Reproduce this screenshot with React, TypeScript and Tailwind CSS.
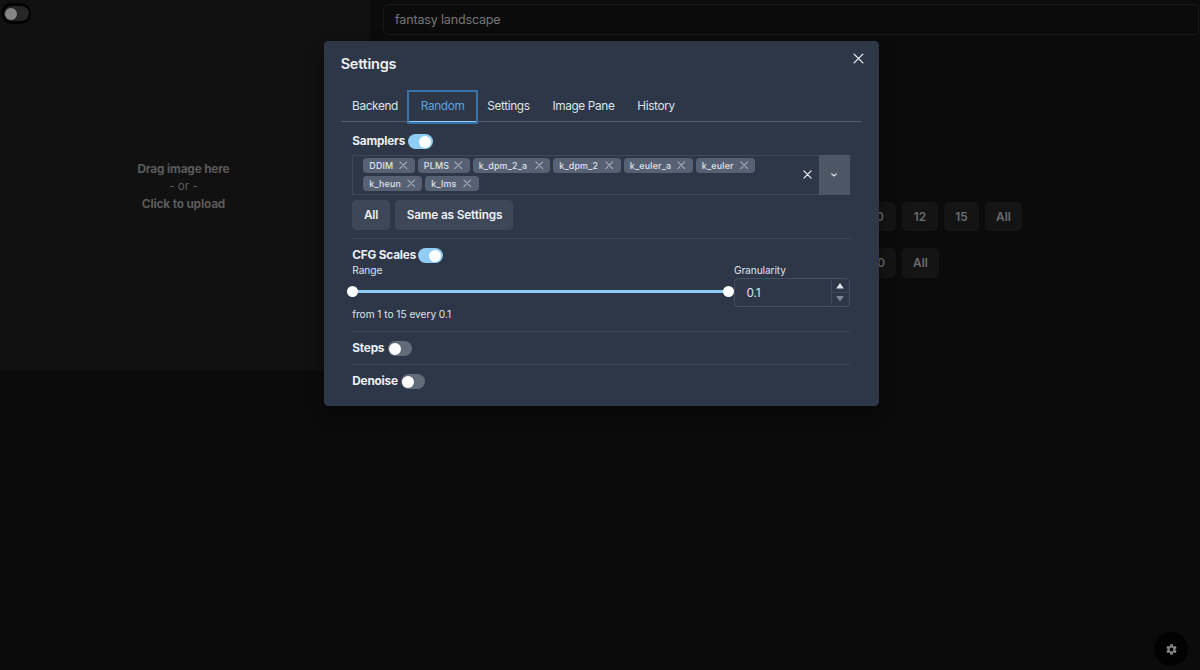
import { MdSettings } from "react-icons/md";

function Cross({ size, width = 1.2, className = "" }: { size: number; width?: number; className?: string }) {
  return (
    <svg width={size} height={size} viewBox="0 0 10 10" className={className} fill="none" stroke="currentColor" strokeWidth={width} strokeLinecap="round">
      <path d="M1 1L9 9M9 1L1 9" />
    </svg>
  );
}

function Switch({ on = false }: { on?: boolean }) {
  return (
    <span className={`flex h-[15px] w-[24.5px] shrink-0 items-center rounded-full p-[1.5px] ${on ? "justify-end bg-[#90cdf4]" : "justify-start bg-[#626b78]"}`}>
      <span className="size-[12px] rounded-full bg-white" />
    </span>
  );
}

function Setting({ label, width, on = false }: { label: string; width: string; on?: boolean }) {
  return (
    <div className="flex h-[15px] items-center text-[11.8px] leading-[15px] font-bold tracking-[-0.2px]">
      <span className={`shrink-0 whitespace-nowrap ${width}`}>{label}</span>
      <Switch on={on} />
    </div>
  );
}

function Tag({ label, width }: { label: string; width: string }) {
  return (
    <span className={`flex h-[15px] items-center justify-between rounded-[4px] bg-[#566174] pr-[7px] pl-[6px] text-[8.9px] font-medium tracking-[0.2px] text-[#e0e4ea] ${width}`}>
      {label}
      <Cross size={8.5} width={1.2} className="text-[#a9b1bd]" />
    </span>
  );
}

function DimButton({ label, width }: { label: string; width: string }) {
  return <button className={`h-[29.5px] rounded-[4.5px] bg-[#141414] pt-[2px] text-[11.8px] font-semibold text-[#6c6c6c] ${width}`}>{label}</button>;
}

const tabs = ["Backend", "Random", "Settings", "Image Pane", "History"];

export default function App() {
  return (
    <div className="relative h-[670px] w-[1200px] overflow-hidden bg-[#0b0b0b] font-['Inter',sans-serif] text-[11.6px] leading-[17.4px]">
      <div className="flex">
        <section className="flex h-[370px] w-[370px] flex-col items-center justify-center bg-[#111111] pt-[4px] pr-[3px] text-[#5b5b5b]">
          <b className="text-[11.8px] font-bold tracking-[-0.15px]">Drag image here</b>
          <span>- or -</span>
          <b className="text-[11.8px] font-bold tracking-[-0.15px]">Click to upload</b>
        </section>
        <main className="flex w-[830px] flex-col pt-[4px] pl-[13px]">
          <div className="flex h-[31px] w-[816px] items-center rounded-[4.5px] border border-[#191919] pl-[11px] text-[12.5px] tracking-[-0.15px] text-[#777777]">fantasy landscape</div>
          <div className="mt-[166.5px] flex gap-[6px] pl-[476px]">
            <DimButton label="10" width="w-[37px]" />
            <DimButton label="12" width="w-[36px]" />
            <DimButton label="15" width="w-[35px]" />
            <DimButton label="All" width="w-[37px]" />
          </div>
          <div className="mt-[17px] flex gap-[6px] pl-[476px]">
            <DimButton label="50" width="w-[37px]" />
            <DimButton label="All" width="w-[37px]" />
          </div>
        </main>
      </div>

      <div className="absolute top-[3px] left-[1px] flex h-[21px] w-[30px] items-center justify-center rounded-full bg-black">
        <span className="flex h-[15px] w-[25px] items-center rounded-full bg-[#262626] p-[1.5px]">
          <span className="size-[12px] rounded-full bg-[#858585]" />
        </span>
      </div>
      <div className="absolute top-[632px] left-[1154px] flex size-[34px] items-center justify-center rounded-full bg-[#020202] text-[#858585]">
        <MdSettings size={13} />
      </div>

      <div role="dialog" className="absolute top-[41px] left-[323.5px] flex h-[365px] w-[555px] flex-col rounded-[4.5px] bg-[#2d3748] px-[17.2px] text-[#eceff3] shadow-[0_7px_18px_rgba(0,0,0,0.4)]">
        <header className="flex h-[51px] items-start justify-between pt-[12px]">
          <h2 className="pt-[1px] text-[14.5px] leading-[20px] font-semibold tracking-[-0.25px]">Settings</h2>
          <Cross size={11} className="-mr-[3px]" />
        </header>
        <nav className="flex h-[30px] border-b border-[#566072] text-[11.8px] tracking-[-0.35px] text-[#dfe4ea]">
          {tabs.map((t) => (
            <button
              key={t}
              className={`flex h-[30px] shrink-0 items-center border-b-[1.5px] px-[11.4px] pt-[1px] ${t === "Random" ? "border-[#90cdf4] text-[#5da2dd] shadow-[0_0_0_2px_#3a73a9]" : "border-transparent"}`}
            >
              {t}
            </button>
          ))}
        </nav>
        <div className="flex flex-col px-[11.6px]">
          <div className="mt-[12px]">
            <Setting label="Samplers" width="w-[56px]" on />
          </div>
          <div className="mt-[5.5px] flex h-[40px] border border-[#3d4859]">
            <div className="flex flex-1 flex-wrap content-start gap-x-[3px] gap-y-[3px] pt-[2.5px] pl-[10px]">
              <Tag label="DDIM" width="w-[51.5px]" />
              <Tag label="PLMS" width="w-[52px]" />
              <Tag label="k_dpm_2_a" width="w-[77.5px]" />
              <Tag label="k_dpm_2" width="w-[67.5px]" />
              <Tag label="k_euler_a" width="w-[69px]" />
              <Tag label="k_euler" width="w-[59.5px]" />
              <Tag label="k_heun" width="w-[59px]" />
              <Tag label="k_lms" width="w-[53.5px]" />
            </div>
            <div className="flex w-[23px] items-center justify-center">
              <Cross size={9} width={1.4} />
            </div>
            <div className="-my-px -mr-px flex w-[31px] items-center justify-center bg-[#4d5665]">
              <svg width="6" height="4" viewBox="0 0 6 4" fill="none" stroke="currentColor" strokeWidth="1.1" strokeLinecap="round">
                <path d="M.7 .8L3 3L5.3 .8" />
              </svg>
            </div>
          </div>
          <div className="mt-[5.5px] flex gap-[5.7px] text-[11.8px] font-semibold tracking-[-0.15px]">
            <button className="h-[29.5px] w-[37.5px] rounded-[4.5px] bg-[#3e4757] pt-px">All</button>
            <button className="h-[29.5px] w-[118px] rounded-[4.5px] bg-[#3e4757] pt-px">Same as Settings</button>
          </div>
          <div className="mt-[8.5px] h-px bg-[#3c4758]" />
          <div className="mt-[9px]">
            <Setting label="CFG Scales" width="w-[66px]" on />
          </div>
          <div className="flex text-[10.2px] leading-[15px] tracking-[-0.1px] text-[#dfe4ea]">
            <div className="w-[381.6px]">
              <div>Range</div>
              <div className="mt-[8px] flex h-[11px] w-[376px] items-center justify-between bg-[linear-gradient(#90cdf4,#90cdf4)] bg-[length:100%_3px] bg-center bg-no-repeat">
                <span className="-ml-[5.5px] size-[11px] rounded-full bg-white" />
                <span className="-mr-[5.5px] size-[11px] rounded-full bg-white" />
              </div>
            </div>
            <div className="flex-1">
              <div>Granularity</div>
              <div className="flex h-[29px] rounded-[4.5px] border border-[#455061] text-[11.8px]">
                <span className="flex flex-1 items-center pt-[2px] pl-[11.5px]">0.1</span>
                <div className="my-px flex w-[17.5px] flex-col border-l border-[#3d4859]">
                  <span className="flex flex-1 items-center justify-center">
                    <svg width="8" height="5.5" viewBox="0 0 7 5"><path d="M3.5 0L7 5H0Z" fill="currentColor" /></svg>
                  </span>
                  <span className="flex flex-1 items-center justify-center border-t border-[#3d4859] text-[#7d8693]">
                    <svg width="8" height="5.5" viewBox="0 0 7 5"><path d="M0 0H7L3.5 5Z" fill="currentColor" /></svg>
                  </span>
                </div>
              </div>
            </div>
          </div>
          <div className="text-[10.2px] leading-[15px] tracking-[-0.05px] text-[#dfe4ea]">from 1 to 15 every 0.1</div>
          <div className="mt-[9px] h-px bg-[#3c4758]" />
          <div className="mt-[9.3px]">
            <Setting label="Steps" width="w-[35.6px]" />
          </div>
          <div className="mt-[7.8px] h-px bg-[#3c4758]" />
          <div className="mt-[9px]">
            <Setting label="Denoise" width="w-[48.4px]" />
          </div>
        </div>
      </div>
    </div>
  );
}
